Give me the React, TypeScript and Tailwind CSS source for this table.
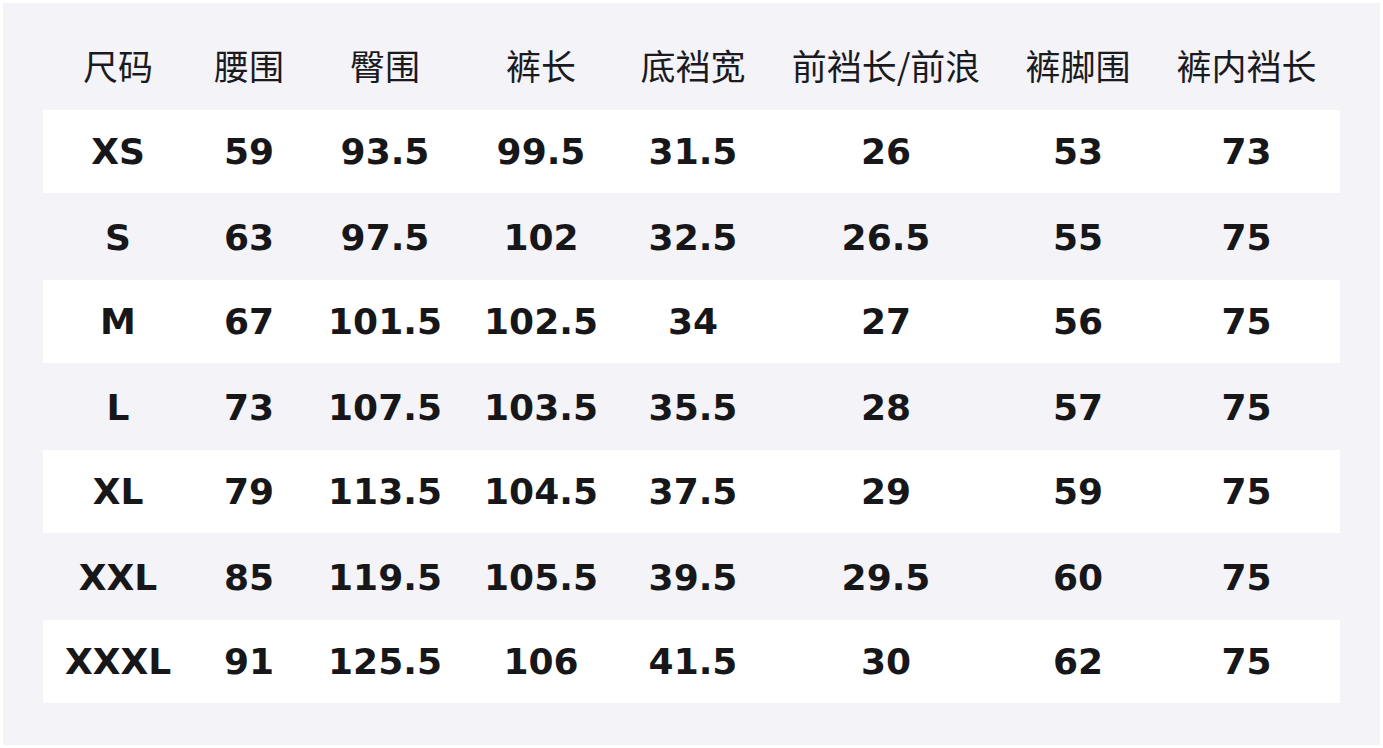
const headers = ['尺码', '腰围', '臀围', '裤长', '底裆宽', '前裆长/前浪', '裤脚围', '裤内裆长']

const rows: string[][] = [
  ['XS', '59', '93.5', '99.5', '31.5', '26', '53', '73'],
  ['S', '63', '97.5', '102', '32.5', '26.5', '55', '75'],
  ['M', '67', '101.5', '102.5', '34', '27', '56', '75'],
  ['L', '73', '107.5', '103.5', '35.5', '28', '57', '75'],
  ['XL', '79', '113.5', '104.5', '37.5', '29', '59', '75'],
  ['XXL', '85', '119.5', '105.5', '39.5', '29.5', '60', '75'],
  ['XXXL', '91', '125.5', '106', '41.5', '30', '62', '75'],
]

const gridCols = 'grid w-[1297px] grid-cols-[150px_112px_160px_152px_152px_234px_150px_187px]'

export default function App() {
  return (
    <div className="min-h-[748px] w-[1383px] bg-white p-[3px]">
      <div className="h-[742px] w-[1377px] bg-[#f3f3f8] pl-[40px]">
        <div className={`${gridCols} h-[107px] items-center pt-[15px]`}>
          {headers.map((h) => (
            <div
              key={h}
              className="text-center text-[35px] leading-none text-[#1b1b1f] [font-family:'Noto_Sans_CJK_SC','DejaVu_Sans',sans-serif]"
            >
              {h}
            </div>
          ))}
        </div>

        {rows.map((r, i) => (
          <div
            key={r[0]}
            className={`${gridCols} h-[85px] items-center ${
              i % 2 === 0 ? 'border-b-2 border-[#f3f3f8] bg-white bg-clip-padding' : ''
            }`}
          >
            {r.map((c, j) => (
              <div
                key={j}
                className="text-center text-[36px] font-bold leading-none text-[#17171a] [font-family:'DejaVu_Sans',sans-serif]"
              >
                {c}
              </div>
            ))}
          </div>
        ))}
      </div>
    </div>
  )
}
